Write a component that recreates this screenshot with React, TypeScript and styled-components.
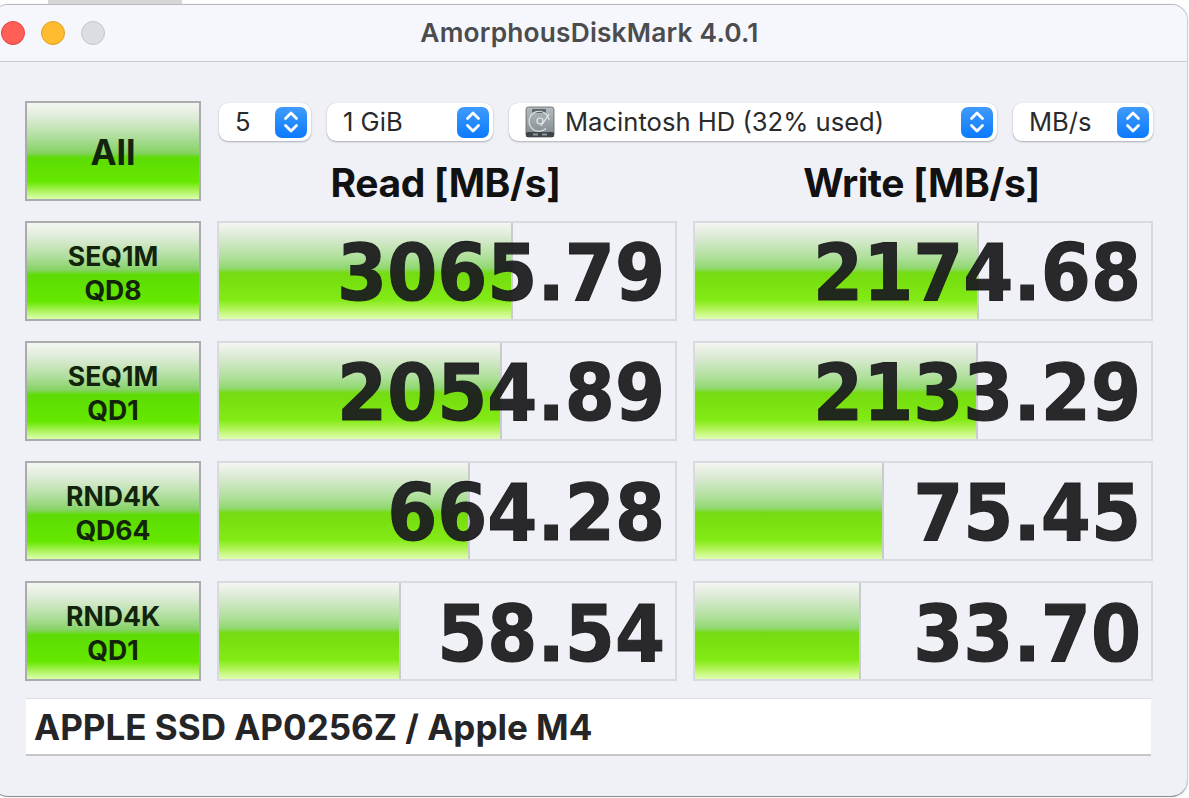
import { Fragment } from "react";
import styled, { createGlobalStyle } from "styled-components";

const GlobalStyle = createGlobalStyle`
  html, body {
    margin: 0;
    padding: 0;
    width: 1189px;
    height: 798px;
    overflow: hidden;
    background: #fdfdfd;
  }
`;

const Page = styled.div`
  width: 1189px;
  height: 798px;
  overflow: hidden;
  font-family: Inter, "Liberation Sans", sans-serif;
`;

const Backdrop = styled.div`
  height: 4px;
  display: flex;
  padding-left: 48px;
`;

const BackdropTab = styled.div`
  width: 134px;
  height: 4px;
  background: #d6d6d6;
`;

const Window = styled.div`
  margin-left: -8px;
  width: 1195px;
  height: 793px;
  box-sizing: border-box;
  background: #f0f1f7;
  border-radius: 16px;
  border-top: 1px solid #b9b9bc;
  border-bottom: 1px solid #8e8e90;
  box-shadow: 1px 0 1px #c8c8cc;
  overflow: hidden;
`;

const TitleBar = styled.div`
  height: 57px;
  box-sizing: border-box;
  padding-bottom: 2px;
  background: #f5f7fc;
  border-bottom: 1px solid #c9c9cd;
  display: flex;
  align-items: center;
  justify-content: center;
  position: relative;
`;

const Lights = styled.div`
  position: absolute;
  left: 9px;
  top: 16px;
  display: flex;
  gap: 16px;
`;

const Light = styled.span<{ $fill: string; $edge: string }>`
  width: 24px;
  height: 24px;
  box-sizing: border-box;
  border-radius: 50%;
  background: ${(p) => p.$fill};
  border: 1px solid ${(p) => p.$edge};
`;

const Title = styled.div`
  font-size: 26.3px;
  font-weight: 600;
  color: #4c4c4e;
  letter-spacing: 0.2px;
`;

const Content = styled.div`
  padding: 39px 0 0 33px;
`;

const Grid = styled.div`
  display: grid;
  grid-template-columns: 176px 460px 460px;
  grid-auto-rows: 100px;
  gap: 20px 16px;
`;

const TestButton = styled.div<{ $large?: boolean }>`
  box-sizing: border-box;
  border: 2px solid #a9abac;
  padding-top: ${(p) => (p.$large ? "2px" : "4px")};
  background: linear-gradient(
    180deg,
    #f4f6f2 0%,
    #dcebd6 16%,
    #a8dc94 38%,
    #86d264 ${(p) => (p.$large ? "52%" : "49%")},
    #5cdc04 ${(p) => (p.$large ? "57%" : "54%")},
    #66e800 82%,
    #a8f256 91%,
    #dcffb0 100%
  );
  display: flex;
  flex-direction: column;
  align-items: center;
  justify-content: center;
  color: #12240c;
  font-weight: 700;
  font-size: ${(p) => (p.$large ? "35px" : "26.6px")};
  line-height: 34px;
`;

const HeadCell = styled.div`
  grid-column: 2 / 4;
  display: grid;
  grid-template-columns: 460px 460px;
  grid-template-rows: 42px 58px;
  column-gap: 16px;
`;

const Controls = styled.div`
  grid-column: 1 / 3;
  display: flex;
  gap: 16px;
  padding: 2px 0 0 2px;
`;

const Select = styled.div<{ $width: number }>`
  width: ${(p) => p.$width}px;
  height: 38px;
  box-sizing: border-box;
  padding: 0 4px 0 16px;
  background: #fff;
  border-radius: 9px;
  box-shadow: 0 1px 2px rgba(0, 0, 0, 0.28), 0 0 1px rgba(0, 0, 0, 0.15);
  display: flex;
  align-items: center;
  gap: 10px;
  font-size: 25.6px;
  color: #2a2a2c;
`;

const SelectLabel = styled.span`
  flex: 1;
  white-space: nowrap;
  margin-top: -2px;
`;

const Stepper = styled.span`
  width: 32px;
  height: 31px;
  border-radius: 7px;
  background: linear-gradient(180deg, #3f9bfb 0%, #0b7afe 100%);
  display: flex;
  align-items: center;
  justify-content: center;
`;

const ColumnHead = styled.div`
  display: flex;
  align-items: center;
  justify-content: center;
  padding: 20px 3px 0 0;
  font-size: 39px;
  font-weight: 700;
  color: #111;
  letter-spacing: -0.4px;
`;

const Meter = styled.div`
  position: relative;
  box-sizing: border-box;
  border: 2px solid #d9dade;
  display: flex;
  align-items: center;
  justify-content: flex-end;
  padding: 4px 10px 0 0;
  overflow: hidden;
`;

const MeterBar = styled.div`
  position: absolute;
  left: 0;
  top: 0;
  bottom: 0;
  box-sizing: border-box;
  border-right: 2px solid #c9cbcd;
  background: linear-gradient(
    180deg,
    #f4f6f2 0%,
    #d8e9d0 16%,
    #aee09a 36%,
    #90d870 47%,
    #74dc10 52%,
    #82ea14 80%,
    #b4f45c 90%,
    #e0ffb4 100%
  );
`;

const MeterValue = styled.span`
  position: relative;
  font-family: "DejaVu Sans", Verdana, sans-serif;
  font-weight: 700;
  font-size: 72px;
  line-height: 1;
  color: rgba(28, 28, 30, 0.94);
  -webkit-text-stroke: 1px rgba(28, 28, 30, 0.94);
  transform: scaleY(1.1);
  transform-origin: center;
`;

const DriveLine = styled.div`
  margin: 17px 0 0 1px;
  width: 1125px;
  height: 58px;
  box-sizing: border-box;
  padding-left: 8px;
  background: #fff;
  border-top: 1px solid #dfdfe4;
  border-bottom: 2px solid #c6c6ca;
  display: flex;
  align-items: center;
  font-size: 35px;
  font-weight: 700;
  color: #252527;
`;

const ChevronIcon = () => (
  <svg width="20" height="26" viewBox="0 0 20 26" fill="none" stroke="#fff" strokeWidth="2.8" strokeLinecap="round" strokeLinejoin="round">
    <path d="M4.5 9.5 10 4l5.5 5.5" />
    <path d="M4.5 16.5 10 22l5.5-5.5" />
  </svg>
);

const DriveIcon = () => (
  <svg width="30" height="32" viewBox="0 0 30 32" style={{ flexShrink: 0 }}>
    <defs>
      <linearGradient id="hd" x1="0" y1="0" x2="0" y2="1">
        <stop offset="0" stopColor="#b4bcbf" />
        <stop offset="1" stopColor="#7f888c" />
      </linearGradient>
    </defs>
    <rect x="1" y="1" width="28" height="30" rx="2.5" fill="url(#hd)" stroke="#5e6569" strokeWidth="0.8" />
    <rect x="7" y="3" width="14" height="4" rx="1" fill="#5f676b" />
    <path d="M24 14a10 10 0 1 0-3 8.5" fill="none" stroke="#dde2e3" strokeWidth="1.2" />
    <circle cx="15" cy="15" r="3" fill="none" stroke="#e8ecec" strokeWidth="1.2" />
    <path d="M24 8 16 20" stroke="#e8ecec" strokeWidth="1.2" />
    <rect x="1" y="26" width="28" height="5" rx="1.5" fill="#3f4548" />
    <rect x="8" y="27.5" width="5" height="2" fill="#8f979b" />
    <rect x="17" y="27.5" width="5" height="2" fill="#8f979b" />
  </svg>
);

const rows = [
  { top: "SEQ1M", bottom: "QD8", read: { value: "3065.79", width: 294 }, write: { value: "2174.68", width: 284 } },
  { top: "SEQ1M", bottom: "QD1", read: { value: "2054.89", width: 283 }, write: { value: "2133.29", width: 283 } },
  { top: "RND4K", bottom: "QD64", read: { value: "664.28", width: 251 }, write: { value: "75.45", width: 189 } },
  { top: "RND4K", bottom: "QD1", read: { value: "58.54", width: 182 }, write: { value: "33.70", width: 166 } },
];

export default function App() {
  return (
    <Page>
      <GlobalStyle />
      <Backdrop>
        <BackdropTab />
      </Backdrop>
      <Window>
        <TitleBar>
          <Lights>
            <Light $fill="#ff5f57" $edge="#e0443e" />
            <Light $fill="#febc2e" $edge="#dea123" />
            <Light $fill="#dcdde1" $edge="#c4c5c9" />
          </Lights>
          <Title>AmorphousDiskMark 4.0.1</Title>
        </TitleBar>
        <Content>
          <Grid>
            <TestButton $large>All</TestButton>
            <HeadCell>
              <Controls>
                <Select $width={92}>
                  <SelectLabel>5</SelectLabel>
                  <Stepper><ChevronIcon /></Stepper>
                </Select>
                <Select $width={166}>
                  <SelectLabel>1 GiB</SelectLabel>
                  <Stepper><ChevronIcon /></Stepper>
                </Select>
                <Select $width={488}>
                  <DriveIcon />
                  <SelectLabel>Macintosh HD (32% used)</SelectLabel>
                  <Stepper><ChevronIcon /></Stepper>
                </Select>
                <Select $width={140}>
                  <SelectLabel>MB/s</SelectLabel>
                  <Stepper><ChevronIcon /></Stepper>
                </Select>
              </Controls>
              <ColumnHead>Read [MB/s]</ColumnHead>
              <ColumnHead>Write [MB/s]</ColumnHead>
            </HeadCell>
            {rows.map((row) => (
              <Fragment key={row.top + row.bottom}>
                <TestButton>
                  <span>{row.top}</span>
                  <span>{row.bottom}</span>
                </TestButton>
                <Meter>
                  <MeterBar style={{ width: row.read.width }} />
                  <MeterValue>{row.read.value}</MeterValue>
                </Meter>
                <Meter>
                  <MeterBar style={{ width: row.write.width }} />
                  <MeterValue>{row.write.value}</MeterValue>
                </Meter>
              </Fragment>
            ))}
          </Grid>
          <DriveLine>APPLE SSD AP0256Z / Apple M4</DriveLine>
        </Content>
      </Window>
    </Page>
  );
}
